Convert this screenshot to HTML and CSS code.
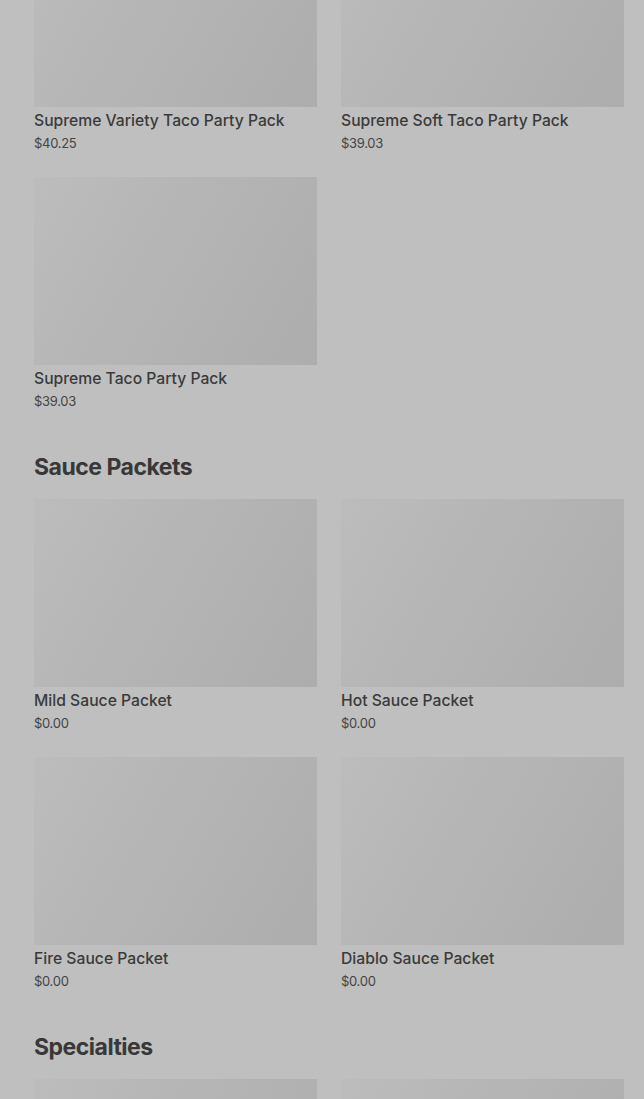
FILE: index.html
```html
<!DOCTYPE html>
<html lang="en">
<head>
    <meta charset="UTF-8">
    <meta name="viewport" content="width=device-width, initial-scale=1.0">
    <title>Menu</title>
    <link rel="stylesheet" href="styles.css">
</head>
<body>
    <div class="menu">
        <section class="section first">
            <div class="grid">
                <div class="item">
                    <div class="thumb"></div>
                    <div class="item-title">Supreme Variety Taco Party Pack</div>
                    <div class="item-price">$40.25</div>
                </div>
                <div class="item">
                    <div class="thumb"></div>
                    <div class="item-title">Supreme Soft Taco Party Pack</div>
                    <div class="item-price">$39.03</div>
                </div>
                <div class="item">
                    <div class="thumb"></div>
                    <div class="item-title">Supreme Taco Party Pack</div>
                    <div class="item-price">$39.03</div>
                </div>
            </div>
        </section>

        <section class="section">
            <h2>Sauce Packets</h2>
            <div class="grid">
                <div class="item">
                    <div class="thumb"></div>
                    <div class="item-title">Mild Sauce Packet</div>
                    <div class="item-price">$0.00</div>
                </div>
                <div class="item">
                    <div class="thumb"></div>
                    <div class="item-title">Hot Sauce Packet</div>
                    <div class="item-price">$0.00</div>
                </div>
                <div class="item">
                    <div class="thumb"></div>
                    <div class="item-title">Fire Sauce Packet</div>
                    <div class="item-price">$0.00</div>
                </div>
                <div class="item">
                    <div class="thumb"></div>
                    <div class="item-title">Diablo Sauce Packet</div>
                    <div class="item-price">$0.00</div>
                </div>
            </div>
        </section>

        <section class="section">
            <h2>Specialties</h2>
            <div class="grid">
                <div class="item">
                    <div class="thumb"></div>
                </div>
                <div class="item">
                    <div class="thumb"></div>
                </div>
            </div>
        </section>
    </div>
</body>
</html>
```

FILE: styles.css
```css
html, body {
    height: 100%;
    overflow: hidden;
}
body {
    font-family: Inter, 'Noto Sans', sans-serif;
    margin: 0;
    background-color: #bfbfbf;
    color: #3b3b3b;
}
.menu {
    padding: 0 20px 0 34px;
    margin-top: -81px;
}
.section {
    margin-top: 40px;
}
.section.first {
    margin-top: 0;
}
.section h2 {
    font-size: 23px;
    font-weight: 700;
    letter-spacing: -0.5px;
    line-height: 32px;
    margin: 0 0 16px;
    color: #383838;
}
.grid {
    display: grid;
    grid-template-columns: 1fr 1fr;
    column-gap: 24px;
    row-gap: 24px;
}
.thumb {
    height: 188px;
    background: linear-gradient(120deg, #bcbcbc 0%, #b4b4b4 50%, #adadad 100%);
}
.item-title {
    font-size: 15.7px;
    font-weight: 500;
    line-height: 20px;
    margin-top: 4px;
    color: #3a3a3a;
    white-space: nowrap;
}
.item-price {
    font-size: 13px;
    line-height: 20px;
    margin-top: 2px;
    color: #444;
    letter-spacing: -0.3px;
}
```
